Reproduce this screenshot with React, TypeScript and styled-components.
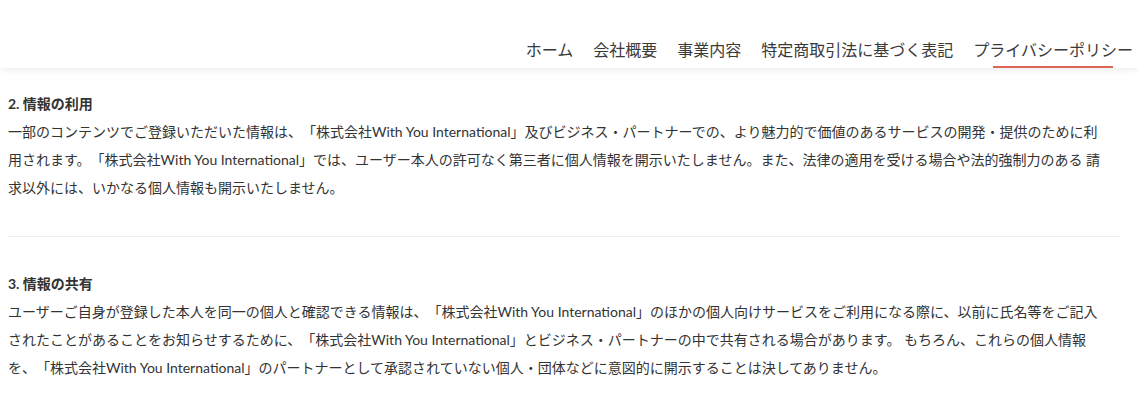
import React from "react";
import styled, { createGlobalStyle } from "styled-components";

const GlobalStyle = createGlobalStyle`
  html, body {
    margin: 0;
    padding: 0;
    background: #ffffff;
  }
  body {
    font-family: "Lato", "Noto Sans CJK JP", sans-serif;
    color: #333333;
    text-spacing-trim: space-all;
    text-autospace: no-autospace;
  }
`;

const Page = styled.div`
  width: 1138px;
  height: 401px;
  overflow: hidden;
  display: flex;
  flex-direction: column;
  background: #fff;
`;

const Header = styled.header`
  height: 68px;
  flex: 0 0 68px;
  display: flex;
  justify-content: flex-end;
  padding-right: 5px;
  background: #fff;
  box-shadow: 0 2px 7px rgba(0, 0, 0, 0.07);
  position: relative;
  z-index: 1;
`;

const Nav = styled.nav`
  display: flex;
  gap: 20px;
  height: 100%;
`;

const NavItem = styled.a<{ $active?: boolean }>`
  position: relative;
  display: flex;
  align-items: flex-end;
  padding-bottom: 8px;
  box-sizing: border-box;
  height: 100%;
  font-size: 16px;
  line-height: 20px;
  color: #3a3a3a;
  text-decoration: none;
  white-space: nowrap;

  &::after {
    content: "";
    display: ${(p) => (p.$active ? "block" : "none")};
    position: absolute;
    left: 20px;
    right: 20px;
    bottom: 0;
    height: 2px;
    background: #dc6558;
  }
`;

const Content = styled.main`
  padding: 22px 18px 0 8px;
  display: flex;
  flex-direction: column;
`;

const Section = styled.section`
  display: flex;
  flex-direction: column;
`;

const Heading = styled.h3`
  margin: 0;
  font-size: 14px;
  line-height: 28px;
  font-weight: 700;
  color: #333;
`;

const Body = styled.p`
  margin: 0;
  font-size: 14px;
  line-height: 28px;
  color: #333;
  white-space: nowrap;
`;

const Divider = styled.hr`
  border: none;
  border-top: 1px solid #ececec;
  margin: 34px 0 33px;
  width: 100%;
`;

const navItems = [
  "ホーム",
  "会社概要",
  "事業内容",
  "特定商取引法に基づく表記",
  "プライバシーポリシー",
];

export default function App() {
  return (
    <>
      <GlobalStyle />
      <Page>
        <Header>
          <Nav>
            {navItems.map((n, i) => (
              <NavItem key={n} href="#" $active={i === navItems.length - 1}>
                {n}
              </NavItem>
            ))}
          </Nav>
        </Header>
        <Content>
          <Section>
            <Heading>2. 情報の利用</Heading>
            <Body>
              一部のコンテンツでご登録いただいた情報は、「株式会社With You International」及びビジネス・パートナーでの、より魅力的で価値のあるサービスの開発・提供のために利
              <br />
              用されます。「株式会社With You International」では、ユーザー本人の許可なく第三者に個人情報を開示いたしません。また、法律の適用を受ける場合や法的強制力のある 請
              <br />
              求以外には、いかなる個人情報も開示いたしません。
            </Body>
          </Section>
          <Divider />
          <Section>
            <Heading>3. 情報の共有</Heading>
            <Body>
              ユーザーご自身が登録した本人を同一の個人と確認できる情報は、「株式会社With You International」のほかの個人向けサービスをご利用になる際に、以前に氏名等をご記入
              <br />
              されたことがあることをお知らせするために、「株式会社With You International」とビジネス・パートナーの中で共有される場合があります。 もちろん、これらの個人情報
              <br />
              を、「株式会社With You International」のパートナーとして承認されていない個人・団体などに意図的に開示することは決してありません。
            </Body>
          </Section>
        </Content>
      </Page>
    </>
  );
}
